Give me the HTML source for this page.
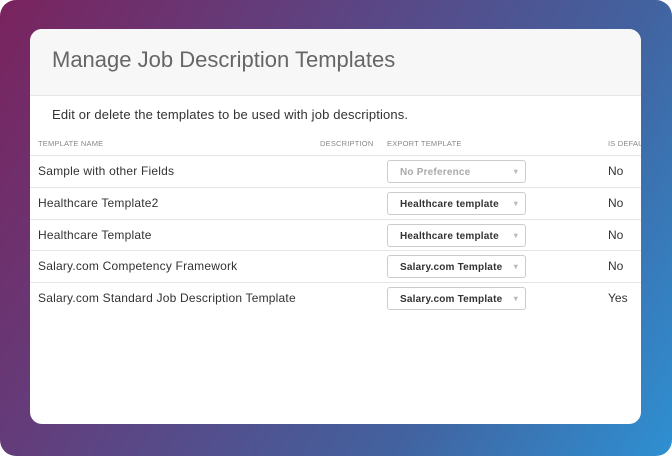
<!DOCTYPE html>
<html><head><meta charset="utf-8"><style>
*{margin:0;padding:0;box-sizing:border-box}
html,body{width:672px;height:456px;overflow:hidden;background:#fff;font-family:"Liberation Sans",sans-serif}
.bg{position:absolute;left:0;top:0;width:672px;height:456px;border-radius:16px;background:linear-gradient(120deg,#7a235e 0%,#5b4685 40%,#42629f 70%,#2e90d2 100%)}
.card{position:absolute;left:30px;top:29px;width:611px;height:395px;background:#fff;border-radius:12px;overflow:hidden}
.hd{height:67px;background:#f7f7f7;border-bottom:1px solid #e6e6e6;padding:18px 0 0 22px;font-size:22px;color:#666;letter-spacing:0}
.sub{position:absolute;left:22px;top:78px;font-size:13px;color:#333;letter-spacing:0.15px}
.th{position:absolute;top:110px;font-size:7.5px;color:#888;letter-spacing:0.2px;white-space:nowrap}
.row{position:absolute;left:0;width:611px;height:32px;border-top:1px solid #e6e6e6}
.nm{position:absolute;left:8px;top:8px;font-size:12px;color:#333;letter-spacing:0.2px;white-space:nowrap}
.sel{position:absolute;left:357px;top:4px;width:139px;height:23px;border:1px solid #ccc;border-radius:3px;font-size:10px;font-weight:bold;color:#333;padding:6px 0 0 12px;letter-spacing:0.2px;white-space:nowrap}
.sel.g{color:#aaa}
.sel:after{content:"▾";position:absolute;right:7px;top:6px;color:#bbb;font-size:8px}
.yn{position:absolute;left:578px;top:8px;font-size:12px;color:#333}
</style></head><body>
<div class="bg"></div>
<div class="card">
<div class="hd">Manage Job Description Templates</div>
<div class="sub">Edit or delete the templates to be used with job descriptions.</div>
<div class="th" style="left:8px">TEMPLATE NAME</div>
<div class="th" style="left:290px">DESCRIPTION</div>
<div class="th" style="left:357px">EXPORT TEMPLATE</div>
<div class="th" style="left:578px">IS DEFAULT</div>
<div class="row" style="top:126px"><div class="nm">Sample with other Fields</div><div class="sel g">No Preference</div><div class="yn">No</div></div>
<div class="row" style="top:158px"><div class="nm">Healthcare Template2</div><div class="sel">Healthcare template</div><div class="yn">No</div></div>
<div class="row" style="top:190px"><div class="nm">Healthcare Template</div><div class="sel">Healthcare template</div><div class="yn">No</div></div>
<div class="row" style="top:221px"><div class="nm">Salary.com Competency Framework</div><div class="sel">Salary.com Template</div><div class="yn">No</div></div>
<div class="row" style="top:253px"><div class="nm">Salary.com Standard Job Description Template</div><div class="sel">Salary.com Template</div><div class="yn">Yes</div></div>
</div>
</body></html>
